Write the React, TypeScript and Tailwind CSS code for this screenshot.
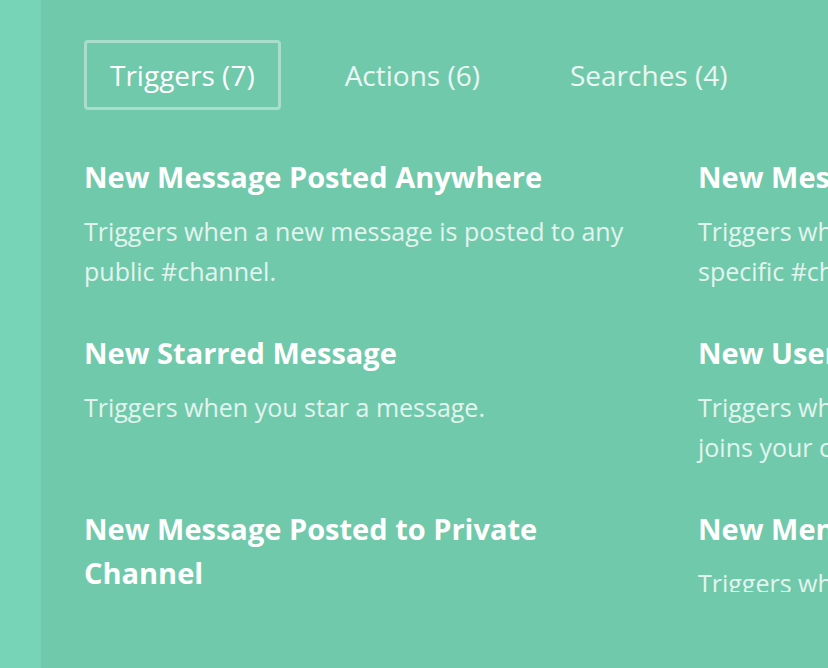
const tabs = [
  { label: "Triggers (7)", active: true },
  { label: "Actions (6)", active: false },
  { label: "Searches (4)", active: false },
];

const triggers = [
  {
    title: "New Message Posted Anywhere",
    description: "Triggers when a new message is posted to any public #channel.",
  },
  {
    title: "New Message Posted to Channel",
    description: "Triggers when a new message is posted to a specific #channel you choose.",
  },
  {
    title: "New Starred Message",
    description: "Triggers when you star a message.",
  },
  {
    title: "New User",
    description: "Triggers when a new team member is added or joins your company.",
  },
  {
    title: "New Message Posted to Private Channel",
    description: "",
  },
  {
    title: "New Mention",
    description: "Triggers when a username or highlight word is mentioned.",
  },
];

export default function App() {
  return (
    <div
      className="flex h-[668px] w-[828px] overflow-hidden bg-[#70c9ab] text-white"
      style={{ fontFamily: '"Open Sans", "Noto Sans", sans-serif' }}
    >
      {/* side stripe */}
      <div className="w-[41px] shrink-0 bg-[#78d4b6]" />

      <div className="flex-1 pl-[43px] pt-[40px]">
        {/* Tabs */}
        <div className="flex items-center gap-[38px]">
          {tabs.map((tab) => (
            <button
              key={tab.label}
              className={`h-[70px] rounded-[4px] border-[3px] px-[23px] text-[28px] ${
                tab.active ? "border-white/40 text-white" : "border-transparent text-white/85"
              }`}
            >
              {tab.label}
            </button>
          ))}
        </div>

        {/* Trigger list */}
        <div className="mt-[45px] h-[437px] overflow-hidden">
          <div className="grid w-[1180px] grid-cols-[560px_560px] gap-x-[54px] gap-y-[40px]">
            {triggers.map((t) => (
              <div key={t.title}>
                <h3 className="text-[29px] font-bold leading-[44px]">{t.title}</h3>
                {t.description && (
                  <p className="mt-[12px] text-[25px] leading-[40px] text-white/80">
                    {t.description}
                  </p>
                )}
              </div>
            ))}
          </div>
        </div>
      </div>
    </div>
  );
}
